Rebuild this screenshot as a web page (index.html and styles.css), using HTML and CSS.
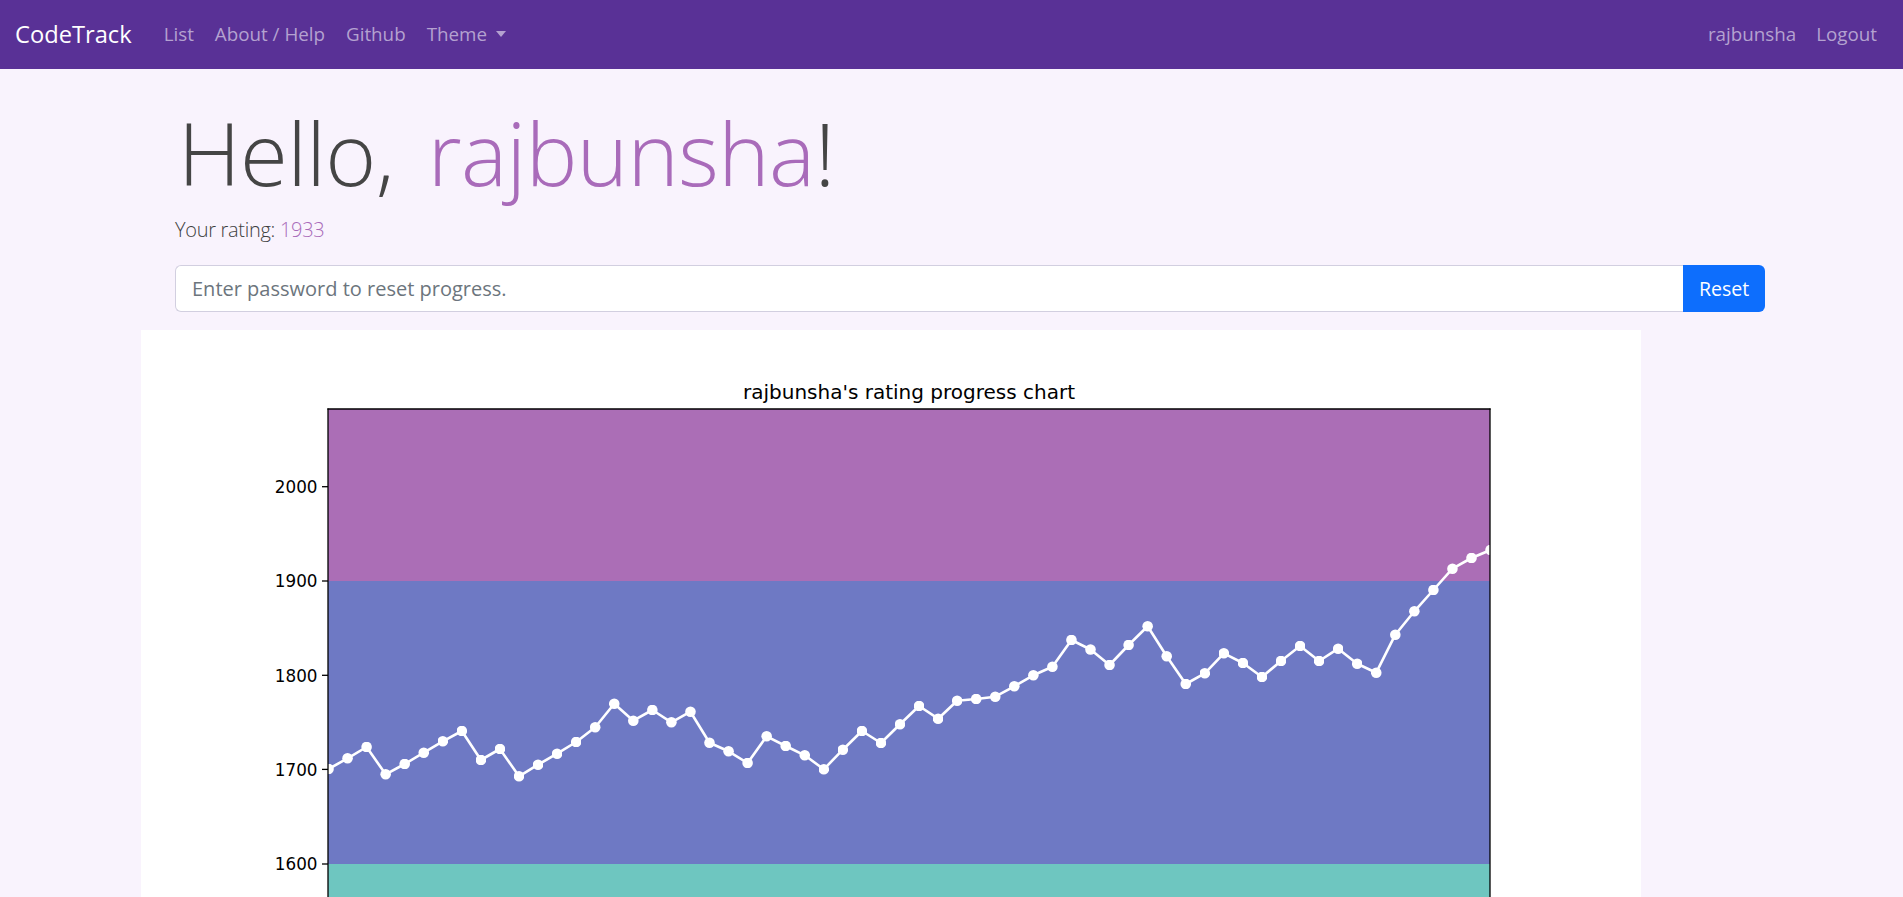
FILE: index.html
```html
<!DOCTYPE html>
<html lang="en">
<head>
<meta charset="utf-8">
<title>CodeTrack</title>
<link rel="stylesheet" href="styles.css">
</head>
<body>
<nav class="navbar">
  <a class="brand" href="#">CodeTrack</a>
  <ul class="nav">
    <li><a class="nav-link" href="#">List</a></li>
    <li><a class="nav-link" href="#">About / Help</a></li>
    <li><a class="nav-link" href="#">Github</a></li>
    <li><a class="nav-link dropdown-toggle" href="#">Theme</a></li>
  </ul>
  <ul class="nav nav-right">
    <li><a class="nav-link" href="#">rajbunsha</a></li>
    <li><a class="nav-link" href="#">Logout</a></li>
  </ul>
</nav>
<main class="container">
  <h1 class="hello">Hello, <span class="accent">rajbunsha</span>!</h1>
  <p class="lead">Your rating: <span class="accent">1933</span></p>
  <form class="input-group">
    <input class="form-control" type="password" placeholder="Enter password to reset progress.">
    <button class="btn" type="button">Reset</button>
  </form>
  <div class="chart-card">
    <svg class="chart" width="1500" height="567" viewBox="0 0 1500 567" xmlns="http://www.w3.org/2000/svg">
      <defs>
        <clipPath id="axclip"><rect x="187" y="79" width="1162" height="520"/></clipPath>
        <marker id="dot" viewBox="0 0 12 12" refX="6" refY="6" markerWidth="10.6" markerHeight="10.6" markerUnits="userSpaceOnUse">
          <circle cx="6" cy="6" r="6" fill="#ffffff"/>
        </marker>
      </defs>
      <text class="title" x="768" y="69" text-anchor="middle">rajbunsha's rating progress chart</text>
      <rect x="187" y="79" width="1162" height="172" fill="#ab6eb6"/>
      <rect x="187" y="251" width="1162" height="283" fill="#6e79c4"/>
      <rect x="187" y="534" width="1162" height="60" fill="#6ec6c0"/>
      <g clip-path="url(#axclip)">
        <polyline fill="none" stroke="#ffffff" stroke-width="2.6" stroke-linejoin="round"
          marker-start="url(#dot)" marker-mid="url(#dot)" marker-end="url(#dot)"
          points="187.5,439 206.55,428.3 225.6,417 244.65,444.3 263.7,434 282.75,422.7 301.8,411.3 320.85,401 339.9,430 358.95,419 378,446.3 397.05,434.7 416.1,423.7 435.15,412 454.2,397.3 473.25,373.7 492.3,390.7 511.35,380 530.4,392.3 549.45,381.7 568.5,412.7 587.55,421.3 606.6,433 625.65,406.3 644.7,416 663.75,425.3 682.8,439.3 701.85,419.7 720.9,401 739.95,413 759,394.3 778.05,376 797.1,388.7 816.15,370.7 835.2,369 854.25,366.7 873.3,356.3 892.35,345.3 911.4,336.7 930.45,310 949.5,319.5 968.55,335 987.6,315 1006.65,296.3 1025.7,326.3 1044.75,354 1063.8,343.3 1082.85,323.3 1101.9,333 1120.95,347 1140,331 1159.05,316 1178.1,331 1197.15,318.7 1216.2,333.7 1235.25,342.7 1254.3,304.7 1273.35,281.3 1292.4,260 1311.45,238.7 1330.5,228 1349.55,220"/>
      </g>
      <g class="spines" stroke="#000000" stroke-width="1.3" fill="none">
        <line x1="187" y1="78.4" x2="187" y2="600"/>
        <line x1="1349" y1="78.4" x2="1349" y2="600"/>
        <line x1="186.4" y1="79" x2="1349.6" y2="79"/>
        <line x1="181" y1="156.7" x2="187" y2="156.7"/>
        <line x1="181" y1="251" x2="187" y2="251"/>
        <line x1="181" y1="345.3" x2="187" y2="345.3"/>
        <line x1="181" y1="439.4" x2="187" y2="439.4"/>
        <line x1="181" y1="534" x2="187" y2="534"/>
      </g>
      <g class="ticks" text-anchor="end">
        <text x="176.5" y="163">2000</text>
        <text x="176.5" y="257.3">1900</text>
        <text x="176.5" y="351.6">1800</text>
        <text x="176.5" y="445.7">1700</text>
        <text x="176.5" y="540.3">1600</text>
      </g>
    </svg>
  </div>
</main>
</body>
</html>
```

FILE: styles.css
```css
html, body {
  margin: 0;
  padding: 0;
  overflow: hidden;
}

body {
  background: #f9f3fd;
  font-family: "Open Sans", "Noto Sans", sans-serif;
  color: #444444;
}

.navbar {
  height: 69px;
  background: #593196;
  display: flex;
  align-items: center;
  padding: 0 16px 2px 15px;
  box-sizing: border-box;
}

.brand {
  color: #ffffff;
  text-decoration: none;
  font-size: 23.7px;
  line-height: 36px;
  margin-right: 21.5px;
  margin-top: 1px;
}

.nav {
  list-style: none;
  display: flex;
  margin: 0;
  padding: 0;
}

.nav-right {
  margin-left: auto;
}

.nav-link {
  display: block;
  color: #b4a2d0;
  text-decoration: none;
  font-size: 18.8px;
  line-height: 28px;
  padding: 0 10.5px;
}

.nav-right .nav-link {
  padding: 0 10px;
}

.dropdown-toggle::after {
  content: "";
  display: inline-block;
  margin-left: 9.5px;
  vertical-align: 4px;
  border-top: 6px solid #b4a2d0;
  border-left: 5.5px solid transparent;
  border-right: 5.5px solid transparent;
}

.container {
  padding: 0 138px 0 175px;
}

.hello {
  margin: 31px 0 0 3px;
  font-size: 87px;
  font-weight: 300;
  line-height: 104px;
  color: #454545;
  letter-spacing: -0.6px;
  word-spacing: 12px;
}

.accent {
  color: #a96bba;
}

.lead {
  margin: 11px 0 0 0;
  font-size: 20px;
  font-weight: 300;
  line-height: 30px;
  color: #3f3f3f;
  letter-spacing: -0.3px;
}

.input-group {
  display: flex;
  margin: 20px 0 0 0;
  height: 47px;
}

.form-control {
  flex: 1;
  min-width: 0;
  box-sizing: border-box;
  height: 47px;
  border: 1px solid #d2cfe0;
  border-right: none;
  border-radius: 6px 0 0 6px;
  background: #ffffff;
  padding: 0 16px;
  font-family: "Open Sans", "Noto Sans", sans-serif;
  font-size: 20px;
  color: #444444;
  outline: none;
}

.form-control::placeholder {
  color: #6c757d;
}

.btn {
  width: 82px;
  height: 47px;
  border: none;
  border-radius: 0 6px 6px 0;
  background: #0d6efd;
  color: #ffffff;
  font-family: "Open Sans", "Noto Sans", sans-serif;
  font-size: 19.5px;
  padding: 0;
}

.chart-card {
  margin: 18px 0 0 -34px;
  width: 1500px;
  height: 567px;
  background: #ffffff;
  overflow: hidden;
}

.chart {
  display: block;
}

.chart text {
  font-family: "DejaVu Sans", sans-serif;
  fill: #000000;
}

.chart .title {
  font-size: 20px;
}

.chart .ticks text {
  font-size: 16.8px;
}
```
